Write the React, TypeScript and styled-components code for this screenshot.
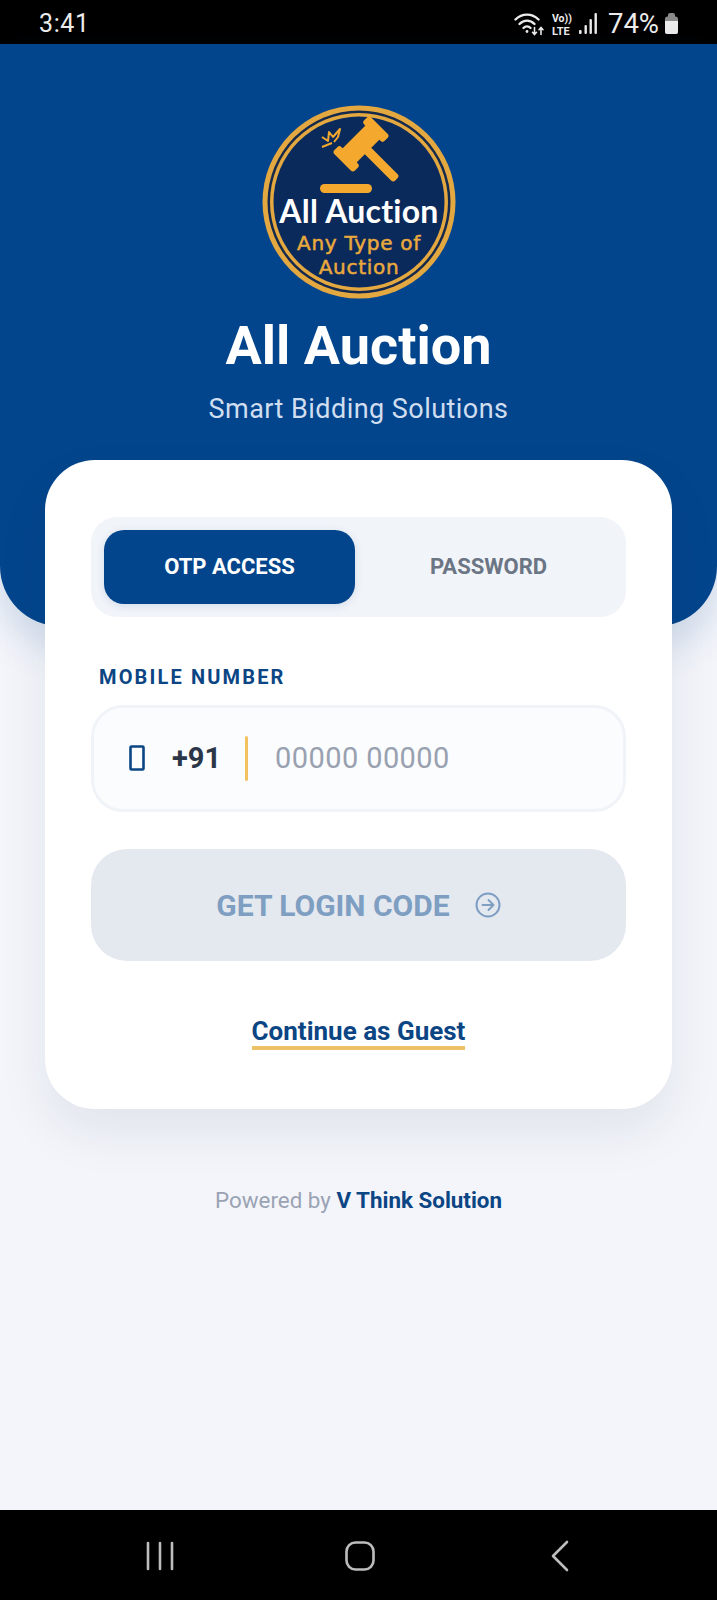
import styled, { createGlobalStyle } from 'styled-components';

const GlobalStyle = createGlobalStyle`
  * {
    box-sizing: border-box;
  }

  body {
    margin: 0;
    background: #000;
    font-family: Roboto, 'Liberation Sans', sans-serif;
  }
`;

const Screen = styled.div`
  width: 717px;
  height: 1600px;
  display: flex;
  flex-direction: column;
  overflow: hidden;
`;

const StatusBar = styled.div`
  height: 44px;
  flex: none;
  background: #000;
  color: #ececec;
  display: flex;
  align-items: center;
  justify-content: space-between;
  padding: 3px 38px 0 39px;
`;

const Clock = styled.span`
  font-size: 25px;
  line-height: 1;
  letter-spacing: 0.6px;
`;

const StatusIcons = styled.div`
  display: flex;
  align-items: center;
  gap: 7px;
`;

const Battery = styled.span`
  font-size: 27.5px;
  line-height: 1;
  margin: 0 -2px 0 3px;
`;

const Content = styled.main`
  flex: 1;
  background: #f3f5fa;
  display: flex;
  flex-direction: column;
  align-items: center;
`;

const Hero = styled.header`
  width: 100%;
  height: 582px;
  flex: none;
  background: #03458c;
  border-radius: 0 0 60px 60px;
  box-shadow: 0 18px 40px rgba(3, 69, 140, 0.16);
  display: flex;
  flex-direction: column;
  align-items: center;
  padding-top: 60px;
`;

const Title = styled.h1`
  margin: 14px 0 0;
  color: #fff;
  font-size: 54px;
  line-height: 64px;
  font-weight: 700;
`;

const Subtitle = styled.p`
  margin: 14px 0 0;
  color: #d0def0;
  font-size: 27px;
  line-height: 34px;
  letter-spacing: 0.45px;
`;

const Card = styled.section`
  width: 627px;
  height: 649px;
  flex: none;
  margin-top: -166px;
  position: relative;
  background: #fff;
  border-radius: 50px;
  box-shadow: 0 24px 50px rgba(20, 40, 80, 0.08);
  padding: 57px 46px 0;
  display: flex;
  flex-direction: column;
`;

const Tabs = styled.div`
  height: 100px;
  flex: none;
  background: #f1f4f9;
  border-radius: 26px;
  padding: 13px;
  display: grid;
  grid-template-columns: 251px 1fr;
  gap: 9px;
`;

const Tab = styled.div<{ $active?: boolean }>`
  display: flex;
  align-items: center;
  justify-content: center;
  padding-bottom: 1px;
  border-radius: 20px;
  font-size: 22px;
  font-weight: 700;
  background: ${({ $active }) => ($active ? '#03458c' : 'transparent')};
  color: ${({ $active }) => ($active ? '#fff' : '#6b7584')};
  box-shadow: ${({ $active }) => ($active ? '0 2px 8px rgba(3, 69, 140, 0.12)' : 'none')};
`;

const Label = styled.label`
  margin: 47px 0 0 8px;
  color: #0b4583;
  font-size: 20px;
  line-height: 26px;
  font-weight: 700;
  letter-spacing: 2.15px;
`;

const InputRow = styled.div`
  height: 107px;
  flex: none;
  margin-top: 15px;
  background: #fbfcfe;
  border: 3px solid #f0f3f7;
  border-radius: 32px;
  display: flex;
  align-items: center;
  padding: 0 0 2px 35px;
`;

const CountryCode = styled.span`
  margin-left: 27px;
  color: #2b3648;
  font-size: 29px;
  font-weight: 700;
`;

const Divider = styled.span`
  width: 3px;
  height: 45px;
  margin: 2px 27px 0 24px;
  background: #f2c260;
  border-radius: 2px;
`;

const Placeholder = styled.span`
  color: #99a1b0;
  font-size: 29px;
  letter-spacing: 0.4px;
`;

const SubmitButton = styled.button`
  height: 112px;
  flex: none;
  margin-top: 37px;
  border: 0;
  background: #e4e8ef;
  border-radius: 36px;
  color: #7e9ec2;
  font-family: inherit;
  font-size: 30px;
  font-weight: 700;
  display: flex;
  align-items: center;
  justify-content: center;
  gap: 25px;
`;

const GuestLink = styled.a`
  align-self: center;
  margin-top: 55px;
  color: #0b4583;
  font-size: 26px;
  line-height: 30px;
  font-weight: 700;
  border-bottom: 4px solid #ecc168;
`;

const Footer = styled.p`
  margin: 78px 0 0;
  color: #9aa3b3;
  font-size: 22.4px;
  line-height: 26px;
`;

const Company = styled.b`
  color: #0b4583;
  font-weight: 700;
`;

const NavBar = styled.nav`
  height: 90px;
  flex: none;
  background: #000;
  display: grid;
  grid-template-columns: repeat(3, 1fr);
  align-items: center;
  justify-items: center;
  padding: 2px 57px 0 60px;
`;

const LogoBig = styled.text`
  fill: #fff;
  font-family: Lato, sans-serif;
  font-size: 32px;
  font-weight: 700;
  letter-spacing: 0.25px;
  text-anchor: middle;
`;

const LogoSmall = styled.text`
  fill: #e9a93c;
  font-family: 'DejaVu Sans', sans-serif;
  font-size: 20px;
  font-weight: 400;
  letter-spacing: 0.7px;
  stroke: #e9a93c;
  stroke-width: 0.5px;
  text-anchor: middle;
`;

const WifiIcon = () => (
  <svg width="31" height="24" viewBox="0 0 31 24" fill="none" stroke="#ececec" strokeLinecap="round">
    <path d="M1.500 7.500C8 1 18 1 24.500 7.500" strokeWidth="2.400" />
    <path d="M5.500 12C10 7.500 16 7.500 20.500 12" strokeWidth="2.400" />
    <path d="M9.500 16C11.500 14 14.500 14 16.500 16" strokeWidth="2.400" />
    <circle cx="13" cy="19.500" r="1.400" fill="#ececec" stroke="none" />
    <path d="M20.500 15.500v7M18.500 20.300l2 2.200 2-2.200M27 22.500v-7M25 17.700l2-2.200 2 2.200" strokeWidth="1.600" />
  </svg>
);

const VolteIcon = () => (
  <svg width="20" height="26" viewBox="0 0 20 26" fill="#ececec">
    <text x="0" y="11" fontSize="10.500" fontWeight="700" fontFamily="Roboto, sans-serif">Vo))</text>
    <text x="0" y="24" fontSize="11" fontWeight="700" fontFamily="Roboto, sans-serif">LTE</text>
  </svg>
);

const SignalIcon = () => (
  <svg width="19" height="22" viewBox="0 0 19 22" fill="#ececec">
    <rect x="0" y="17" width="2.600" height="4" rx="1" />
    <rect x="5.500" y="12" width="2.400" height="9" rx="1" />
    <rect x="10.500" y="6" width="2.400" height="15" rx="1" />
    <rect x="15.500" y="0" width="2.400" height="21" rx="1" />
  </svg>
);

const BatteryIcon = () => (
  <svg width="15" height="21" viewBox="0 0 15 21">
    <path d="M4 2a2 2 0 0 1 2-2h3a2 2 0 0 1 2 2V4H4z" fill="#8a8a8a" />
    <path d="M1 6A2.500 2.500 0 0 1 3.500 3.500h8A2.500 2.500 0 0 1 14 6v12.500a2.500 2.500 0 0 1-2.500 2.500h-8A2.500 2.500 0 0 1 1 18.500z" fill="#8a8a8a" />
    <path d="M1 8h13v10.500a2.500 2.500 0 0 1-2.500 2.500h-8A2.500 2.500 0 0 1 1 18.500z" fill="#ececec" />
  </svg>
);

// round badge with the gavel, drawn on a 196 unit box
const Logo = () => (
  <svg width="196" height="196" viewBox="0 0 196 196">
    <circle cx="98" cy="98" r="96.500" fill="#e4a840" />
    <circle cx="98" cy="98" r="91.500" fill="#14294c" />
    <circle cx="98" cy="98" r="89" fill="#e4a840" />
    <circle cx="98" cy="98" r="85.500" fill="#0a2a5c" />
    <g fill="#f4a92e" transform="translate(100 40) rotate(45)">
      <rect x="-10" y="-18" width="20" height="36" />
      <rect x="-14.500" y="-26" width="29" height="10" rx="3" />
      <rect x="-14.500" y="16" width="29" height="10" rx="3" />
      <rect x="8" y="-4.500" width="42" height="9" rx="3" />
    </g>
    <path
      d="M61 33l6 4 1-9 4 5 7-8-2 8-4 5M61 43l10-4"
      fill="none"
      stroke="#f4a92e"
      strokeWidth="2"
      strokeLinejoin="round"
    />
    <rect x="59" y="80" width="52" height="9" rx="4.500" fill="#f4a92e" />
    <LogoBig x="98" y="118.500">All Auction</LogoBig>
    <LogoSmall x="98" y="146">Any Type of</LogoSmall>
    <LogoSmall x="98" y="170">Auction</LogoSmall>
  </svg>
);

const PhoneIcon = () => (
  <svg width="16" height="26" viewBox="0 0 16 26" fill="none" stroke="#0b4583" strokeWidth="2.600">
    <rect x="1.500" y="1.500" width="13" height="23" rx="1" />
  </svg>
);

const ArrowCircleIcon = () => (
  <svg width="26" height="26" viewBox="0 0 26 26" fill="none" stroke="#7e9ec2" strokeWidth="2" strokeLinecap="round" strokeLinejoin="round">
    <circle cx="13" cy="13" r="11.500" />
    <path d="M7.500 13h11M13.500 8l5 5-5 5" />
  </svg>
);

const RecentsIcon = () => (
  <svg width="30" height="30" viewBox="0 0 30 30" stroke="#bdbdbd" strokeWidth="2.600" strokeLinecap="round">
    <path d="M3 2v26M15 2v26M27 2v26" />
  </svg>
);

const HomeIcon = () => (
  <svg width="30" height="30" viewBox="0 0 30 30" fill="none" stroke="#bdbdbd" strokeWidth="2.600">
    <rect x="1.500" y="1.500" width="27" height="27" rx="9" />
  </svg>
);

const BackIcon = () => (
  <svg width="20" height="32" viewBox="0 0 20 32" fill="none" stroke="#bdbdbd" strokeWidth="2.600" strokeLinecap="round" strokeLinejoin="round">
    <path d="M17 2L3 16l14 14" />
  </svg>
);

export default function App() {
  return (
    <>
      <GlobalStyle />
      <Screen>
        <StatusBar>
          <Clock>3:41</Clock>
          <StatusIcons>
            <WifiIcon />
            <VolteIcon />
            <SignalIcon />
            <Battery>74%</Battery>
            <BatteryIcon />
          </StatusIcons>
        </StatusBar>
        <Content>
          <Hero>
            <Logo />
            <Title>All Auction</Title>
            <Subtitle>Smart Bidding Solutions</Subtitle>
          </Hero>
          <Card>
            <Tabs>
              <Tab $active>OTP ACCESS</Tab>
              <Tab>PASSWORD</Tab>
            </Tabs>
            <Label>MOBILE NUMBER</Label>
            <InputRow>
              <PhoneIcon />
              <CountryCode>+91</CountryCode>
              <Divider />
              <Placeholder>00000 00000</Placeholder>
            </InputRow>
            <SubmitButton>
              GET LOGIN CODE
              <ArrowCircleIcon />
            </SubmitButton>
            <GuestLink>Continue as Guest</GuestLink>
          </Card>
          <Footer>
            Powered by <Company>V Think Solution</Company>
          </Footer>
        </Content>
        <NavBar>
          <RecentsIcon />
          <HomeIcon />
          <BackIcon />
        </NavBar>
      </Screen>
    </>
  );
}
